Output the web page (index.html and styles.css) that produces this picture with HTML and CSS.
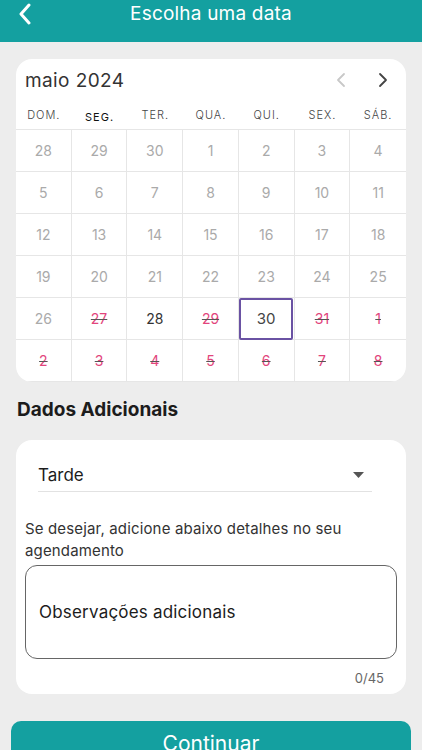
FILE: index.html
```html
<!DOCTYPE html>
<html lang="pt-BR">
<head>
  <meta charset="UTF-8">
  <meta name="viewport" content="width=device-width, initial-scale=1.0">
  <title>Escolha uma data</title>
  <link rel="stylesheet" href="styles.css">
</head>
<body>
  <header class="topbar">
    <svg class="back" width="14" height="22" viewBox="0 0 14 22"><path d="M11 2 L3 11 L11 20" fill="none" stroke="#fff" stroke-width="3" stroke-linecap="round" stroke-linejoin="round"/></svg>
    <h1>Escolha uma data</h1>
  </header>

  <main class="page">
    <section class="card calendar">
      <div class="month-row">
        <span class="month">maio 2024</span>
        <div class="nav">
          <svg width="10" height="16" viewBox="0 0 10 16"><path d="M8 2 L2 8 L8 14" fill="none" stroke="#c8c8c8" stroke-width="1.8" stroke-linecap="round" stroke-linejoin="round"/></svg>
          <svg width="10" height="16" viewBox="0 0 10 16"><path d="M2 2 L8 8 L2 14" fill="none" stroke="#444" stroke-width="1.8" stroke-linecap="round" stroke-linejoin="round"/></svg>
        </div>
      </div>
      <div class="weekdays">
        <span>DOM.</span><span class="today">SEG.</span><span>TER.</span><span>QUA.</span><span>QUI.</span><span>SEX.</span><span>SÁB.</span>
      </div>
      <div class="grid">
        <div class="day off">28</div><div class="day off">29</div><div class="day off">30</div><div class="day off">1</div><div class="day off">2</div><div class="day off">3</div><div class="day off">4</div>
        <div class="day off">5</div><div class="day off">6</div><div class="day off">7</div><div class="day off">8</div><div class="day off">9</div><div class="day off">10</div><div class="day off">11</div>
        <div class="day off">12</div><div class="day off">13</div><div class="day off">14</div><div class="day off">15</div><div class="day off">16</div><div class="day off">17</div><div class="day off">18</div>
        <div class="day off">19</div><div class="day off">20</div><div class="day off">21</div><div class="day off">22</div><div class="day off">23</div><div class="day off">24</div><div class="day off">25</div>
        <div class="day off">26</div><div class="day busy">27</div><div class="day">28</div><div class="day busy">29</div><div class="day"><span class="picked">30</span></div><div class="day busy">31</div><div class="day busy">1</div>
        <div class="day busy">2</div><div class="day busy">3</div><div class="day busy">4</div><div class="day busy">5</div><div class="day busy">6</div><div class="day busy">7</div><div class="day busy">8</div>
      </div>
    </section>

    <h2 class="section-title">Dados Adicionais</h2>

    <section class="card extra">
      <div class="select">
        <span>Tarde</span>
        <svg width="11" height="6" viewBox="0 0 11 6"><path d="M0 0 L11 0 L5.5 6 Z" fill="#555"/></svg>
      </div>
      <p class="hint">Se desejar, adicione abaixo detalhes no seu agendamento</p>
      <div class="notes">Observações adicionais</div>
      <div class="counter">0/45</div>
    </section>

    <button class="continue">Continuar</button>
  </main>
</body>
</html>
```

FILE: styles.css
```css
* {
  box-sizing: border-box;
}
body {
  margin: 0;
  background: #ededed;
  font-family: Inter, "Noto Sans", sans-serif;
  color: #222;
  overflow: hidden;
}
.topbar {
  height: 42px;
  background: #14a0a0;
  display: flex;
  align-items: center;
  justify-content: center;
  position: relative;
}
.topbar h1 {
  margin: 0 0 15px;
  font-size: 19px;
  font-weight: 400;
  color: #fff;
  letter-spacing: .2px;
}
.back {
  position: absolute;
  left: 18px;
  top: 3px;
}
.page {
  padding: 17px 16px 0;
}
.card {
  background: #fff;
  border-radius: 16px;
  overflow: hidden;
}
.month-row {
  height: 42px;
  display: flex;
  align-items: center;
  justify-content: space-between;
  padding: 0 18px 0 9px;
}
.month {
  font-size: 19px;
  letter-spacing: .4px;
  color: #333;
}
.nav {
  display: flex;
  gap: 32px;
}
.weekdays {
  height: 28px;
  display: grid;
  grid-template-columns: repeat(7, 1fr);
  align-items: center;
  text-align: center;
  font-size: 11px;
  font-weight: 300;
  letter-spacing: 1px;
  color: #444;
}
.weekdays .today {
  color: #111;
  font-weight: 400;
  padding-top: 4px;
}
.grid {
  display: grid;
  grid-template-columns: repeat(7, 1fr);
  border-top: 1px solid #e6e6e6;
}
.day {
  height: 42px;
  display: flex;
  align-items: center;
  justify-content: center;
  font-size: 14px;
  color: #333;
  border-bottom: 1px solid #e6e6e6;
  border-right: 1px solid #e6e6e6;
}
.day:nth-child(7n) {
  border-right: none;
}
.day.off {
  color: #aaa;
}
.day.busy {
  color: #e2457c;
  text-decoration: line-through;
  text-decoration-color: #555;
}
.picked {
  width: 54px;
  height: 42px;
  display: flex;
  align-items: center;
  justify-content: center;
  border: 2px solid #6a52a3;
  border-radius: 2px;
  font-size: 15px;
  color: #444;
}
.section-title {
  margin: 16px 1px 19px;
  font-size: 19px;
  font-weight: 700;
  color: #1c1c1c;
}
.extra {
  padding: 15px 9px 8px;
}
.select {
  margin: 0 25px 0 13px;
  height: 37px;
  display: flex;
  align-items: center;
  justify-content: space-between;
  padding: 3px 8px 0 0;
  border-bottom: 1px solid #e2e2e2;
  font-size: 17px;
  color: #1c1c1c;
}
.hint {
  margin: 26px 0 0;
  font-size: 15px;
  line-height: 22px;
  letter-spacing: .15px;
  color: #333;
}
.notes {
  margin-top: 3px;
  height: 94px;
  border: 1px solid #666;
  border-radius: 12px;
  display: flex;
  align-items: center;
  padding: 0 13px;
  font-size: 17px;
  letter-spacing: .2px;
  color: #1c1c1c;
}
.counter {
  text-align: right;
  padding: 11px 13px 0;
  font-size: 13px;
  color: #666;
}
.continue {
  display: block;
  margin: 27px -5px 0;
  width: calc(100% + 10px);
  height: 44px;
  border: none;
  border-radius: 10px;
  background: #14a0a0;
  color: #fff;
  font-family: inherit;
  font-size: 21px;
  padding: 0;
}
```
